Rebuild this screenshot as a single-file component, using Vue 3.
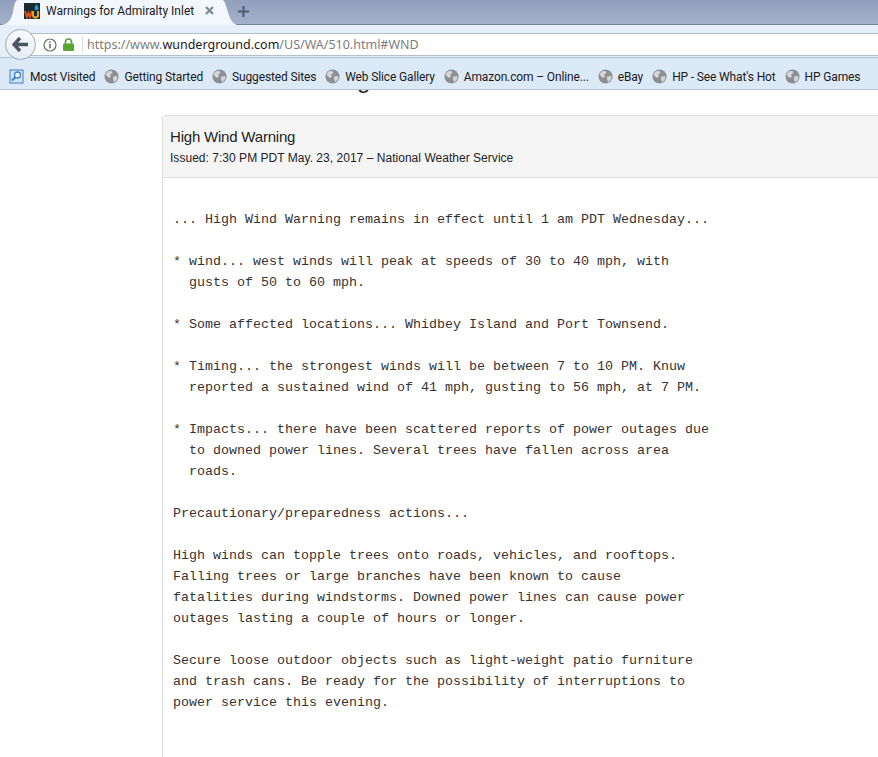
<script setup>
const marks = ['Getting Started','Suggested Sites','Web Slice Gallery','Amazon.com – Online...','eBay',"HP - See What's Hot",'HP Games']
const body = `... High Wind Warning remains in effect until 1 am PDT Wednesday...

* wind... west winds will peak at speeds of 30 to 40 mph, with
  gusts of 50 to 60 mph.

* Some affected locations... Whidbey Island and Port Townsend.

* Timing... the strongest winds will be between 7 to 10 PM. Knuw
  reported a sustained wind of 41 mph, gusting to 56 mph, at 7 PM.

* Impacts... there have been scattered reports of power outages due
  to downed power lines. Several trees have fallen across area
  roads.

Precautionary/preparedness actions...

High winds can topple trees onto roads, vehicles, and rooftops.
Falling trees or large branches have been known to cause
fatalities during windstorms. Downed power lines can cause power
outages lasting a couple of hours or longer.

Secure loose outdoor objects such as light-weight patio furniture
and trash cans. Be ready for the possibility of interruptions to
power service this evening.`
</script>

<template>
  <div class="page">
    <header class="chrome">
      <div class="tabstrip">
        <div class="tab">
          <svg class="logo" width="16" height="16" viewBox="0 0 16 16">
            <rect width="16" height="16" fill="#1c2a33"/>
            <path d="M12.5 1 C13.5 3 14.5 4 14.5 5.2 A2 2 0 0 1 10.5 5.2 C10.5 4 11.5 3 12.5 1Z" fill="#2a9ad6"/>
            <path d="M1 8 L3 14 L4.5 10 L6 14 L8 8" fill="none" stroke="#e8541a" stroke-width="1.8"/>
            <path d="M9 8 V12 A2.4 2.4 0 0 0 14 12 V8" fill="none" stroke="#f2b01e" stroke-width="1.8"/>
          </svg>
          <span class="tab-title">Warnings for Admiralty Inlet</span>
          <svg class="tab-close" width="9" height="9" viewBox="0 0 9 9"><path d="M1 1L8 8M8 1L1 8" stroke="#7f8794" stroke-width="2.2"/></svg>
        </div>
        <svg class="plus" width="11" height="11" viewBox="0 0 11 11"><path d="M5.5 0V11M0 5.5H11" stroke="#4f5a6b" stroke-width="2"/></svg>
      </div>
      <div class="navbar">
        <div class="urlbar">
          <svg class="info" width="14" height="14" viewBox="0 0 14 14">
            <circle cx="7" cy="7" r="6" fill="none" stroke="#6d6d6d" stroke-width="1.2"/>
            <path d="M7 6V10.5M7 3.4V5" stroke="#6d6d6d" stroke-width="1.6"/>
          </svg>
          <svg class="lock" width="11" height="13" viewBox="0 0 11 13">
            <path d="M2.5 6V4a3 3 0 0 1 6 0v2" fill="none" stroke="#5aa63a" stroke-width="1.7"/>
            <rect y="5.5" width="11" height="7.5" rx="1.2" fill="#58a733"/>
          </svg>
          <span class="sep"></span>
          <span class="url">https://www.<b>wunderground.com</b>/US/WA/510.html#WND</span>
        </div>
        <div class="back">
          <svg width="17" height="15" viewBox="0 0 17 15">
            <path d="M8 1 L2 7.5 L8 14 M2.5 7.5 H16" fill="none" stroke="#4c5563" stroke-width="3.4"/>
          </svg>
        </div>
      </div>
      <div class="bookmarks">
        <span class="mark first">
          <svg width="15" height="15" viewBox="0 0 15 15">
            <rect x="1" y="1" width="13" height="13" fill="#cfe4f7" stroke="#3b7fc4"/>
            <circle cx="8.5" cy="6" r="3" fill="#fff" stroke="#3b7fc4" stroke-width="1.3"/>
            <path d="M6.3 8.2L3 11.5" stroke="#3b7fc4" stroke-width="2"/>
          </svg>
          Most Visited
        </span>
        <span v-for="m in marks" :key="m" class="mark">
          <svg width="15" height="15" viewBox="0 0 16 16">
            <circle cx="8" cy="8" r="7.5" fill="#8d8f93"/>
            <path d="M4 2.5 L8 2 L9 4 L6.5 6 L7.5 8 L5 9.5 L2.5 7 L1.5 6Z M10 8 L14 7.5 L14 11 L11 14 L9.5 11Z" fill="#d4d6d9"/>
          </svg>
          {{ m }}
        </span>
      </div>
    </header>
    <main class="content">
      <div class="clip"><span class="clipped">g</span></div>
      <section class="card">
        <div class="card-head">
          <h2>High Wind Warning</h2>
          <p>Issued: 7:30 PM PDT May. 23, 2017 – National Weather Service</p>
        </div>
        <pre class="card-body">{{ body }}</pre>
      </section>
    </main>
  </div>
</template>

<style>
html, body { margin: 0; background: #fff; overflow: hidden; }
</style>

<style scoped>
.page { width: 878px; height: 757px; overflow: hidden; position: relative; background: #fff; }
.chrome { font-family: "Open Sans", "Noto Sans", sans-serif; position: relative; z-index: 2; }
.tabstrip {
  height: 24px; background: linear-gradient(#919fbc, #a3b1cb); border-bottom: 1px solid #6f7f98;
  position: relative; box-sizing: content-box;
}
.tab {
  position: absolute; left: 0; top: 0; width: 238px; height: 25px; box-sizing: border-box;
  background: #f1f7fd; display: flex; align-items: flex-start; padding: 3px 0 0 24px;
  clip-path: path('M0 25 C8 25 11 20 13 12 C14 6 15 0 18 0 L222 0 C225 0 226 6 228 12 C230 20 234 25 238 25 Z');
}
.logo { flex: none; }
.tab-title { margin-left: 6px; width: 150px; white-space: nowrap; overflow: hidden; font: 12px/16px Roboto, sans-serif; color: #1a1a1a; }
.tab-close { flex: none; margin: 3px 0 0 9px; }
.plus { position: absolute; left: 238px; top: 6px; }
.navbar {
  height: 32px; background: #e4eff9; position: relative; box-sizing: border-box; padding-top: 8px;
}
.urlbar {
  position: absolute; left: 24px; right: -4px; top: 8px; height: 23px; box-sizing: border-box;
  background: #fff; border: 1px solid #b2bfcf; border-radius: 2px;
  display: flex; align-items: center; padding-left: 18px;
}
.info { flex: none; }
.lock { flex: none; margin-left: 6px; }
.sep { width: 1px; height: 17px; background: #d8dde3; margin-left: 8px; }
.url { margin-left: 4px; font-size: 12.5px; color: #7d7d7d; white-space: nowrap; font-family: "Noto Sans", sans-serif; }
.url b { font-weight: 400; color: #1a1a1a; }
.back {
  position: absolute; left: 5px; top: 4px; width: 31px; height: 31px; box-sizing: border-box;
  border: 1px solid #9aa9bb; border-radius: 50%; background: linear-gradient(#fbfdff, #e3ebf3);
  display: flex; align-items: center; justify-content: center;
}
.bookmarks {
  height: 33px; box-sizing: border-box; background: #dce9f7; border-top: 1px solid #b2bfcf; border-bottom: 1px solid #b8c3d1;
  display: flex; align-items: center; gap: 9px; padding: 6px 0 0 9px; white-space: nowrap;
}
.mark { display: inline-flex; align-items: center; gap: 5px; font: 12px Roboto, sans-serif; letter-spacing: -.14px; color: #1a1a1a; }
.mark.first { gap: 6px; }
.content { position: relative; height: 667px; padding: 25px 0 0 162px; box-sizing: border-box; overflow: hidden; }
.clip { position: absolute; left: 357px; top: 0; width: 14px; height: 3px; overflow: hidden; }
.clipped { position: absolute; left: 0; top: -24px; font: 24px/28px "Liberation Sans", sans-serif; color: #222; }
.card { width: 760px; border: 1px solid #ddd; border-right: 0; border-radius: 4px 0 0 0; height: 700px; box-sizing: border-box; }
.card-head { height: 62px; box-sizing: border-box; background: #f5f5f5; border-bottom: 1px solid #ddd; padding: 11px 7px; font-family: "Liberation Sans", sans-serif; color: #222; }
.card-head h2 { margin: 0; font-size: 15px; font-weight: 400; line-height: 20px; letter-spacing: -.2px; }
.card-head p { margin: 2px 0 0; font-size: 12px; line-height: 18px; letter-spacing: .03px; }
.card-body { margin: 0; padding: 31px 0 0 10px; font: 13.33px/21px "Liberation Mono", monospace; color: #333; }
</style>
